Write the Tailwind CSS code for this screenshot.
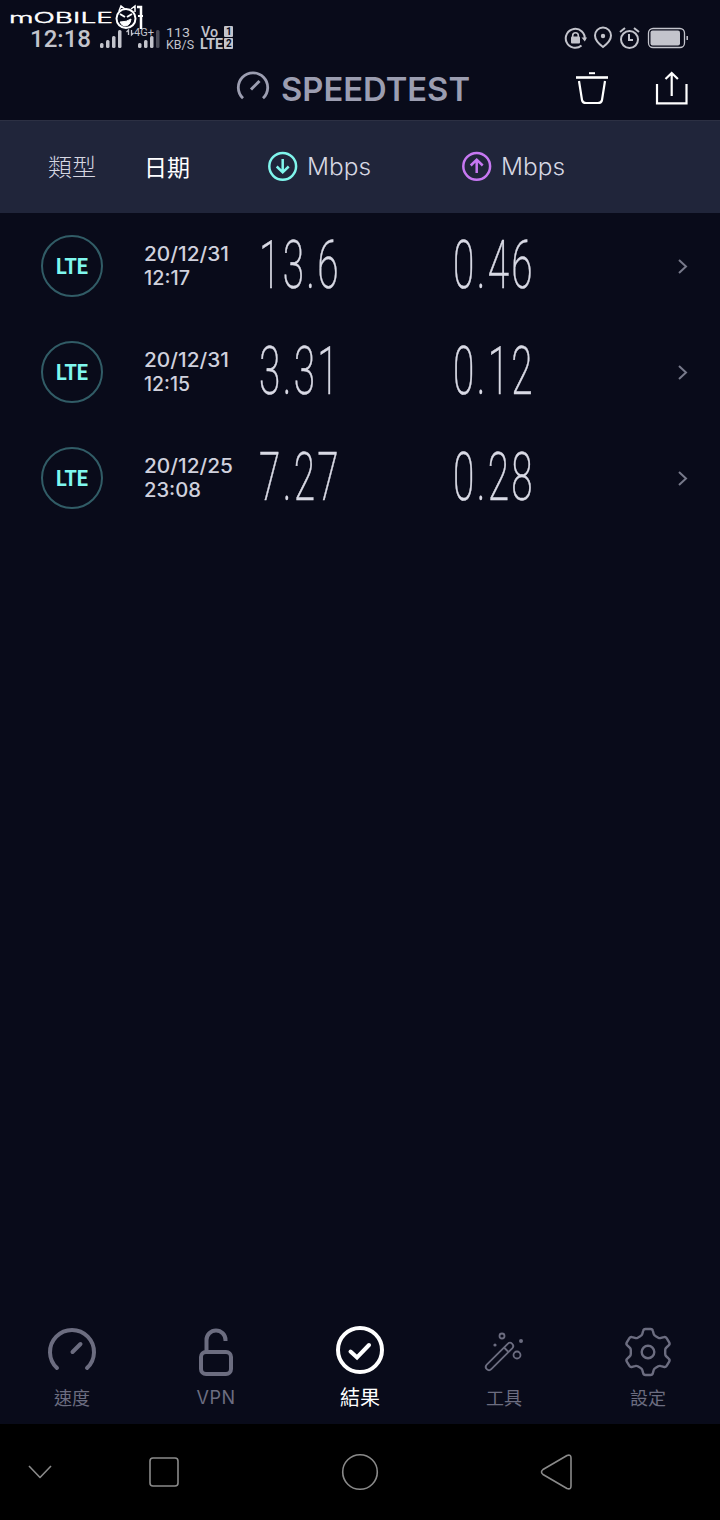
<!DOCTYPE html>
<html lang="zh-Hant">
<head>
    <meta charset="UTF-8">
    <meta name="viewport" content="width=device-width, initial-scale=1.0">
    <title>Speedtest</title>
    <script src="https://cdn.jsdelivr.net/npm/@tailwindcss/browser@4"></script>
</head>
<body class="bg-[#090b1a] font-['Inter','Noto_Sans_CJK_TC',sans-serif]">
    <div class="relative w-[720px] h-[1520px] flex flex-col overflow-hidden">

        <!-- watermark -->
        <svg class="absolute left-0 top-0 z-10" width="160" height="36" fill="none" stroke="#fff">
            <text x="9" y="23" textLength="104" lengthAdjust="spacingAndGlyphs" font-size="14.5" font-weight="300" fill="#fff" stroke="#fff" stroke-width=".4">mOBILE</text>
            <circle cx="126" cy="18.500" r="9.500" stroke-width="2"/>
            <path d="M119 11l2-5 4 3M131 9l4-3 0 6" stroke-width="1.500"/>
            <path d="M120 14l5 3M132 14l-5 3" stroke-width="2"/>
            <path d="M120 22q7 0 11-3q-1 7-6 7q-3 0-5-4z" fill="#fff" stroke-width="1"/>
            <path d="M137 7h4v22" stroke-width="2.500"/>
            <path d="M138 16h5" stroke-width="2"/>
        </svg>

        <!-- status bar -->
        <div class="h-14 shrink-0 flex items-start text-[#c3c4cc]">
            <svg width="250" height="56" fill="currentColor" class="font-['Roboto']">
                <text x="30" y="47" textLength="61" lengthAdjust="spacingAndGlyphs" font-size="24" font-weight="500">12:18</text>
                <g>
                    <rect x="100" y="43" width="3.500" height="5" rx="1.500"/>
                    <rect x="106" y="40" width="3.500" height="8" rx="1.500"/>
                    <rect x="112" y="36" width="3.500" height="12" rx="1.500"/>
                    <rect x="118" y="30" width="3.500" height="18" rx="1.500"/>
                    <rect x="138" y="43" width="3.500" height="5" rx="1.500"/>
                    <rect x="144" y="40" width="3.500" height="8" rx="1.500"/>
                    <rect x="150" y="36" width="3.500" height="12" rx="1.500"/>
                    <rect x="156" y="30" width="3.500" height="18" rx="1.500" opacity=".35"/>
                </g>
                <path d="M128.500 35v-5l-2 2M131.500 30v5l2-2" stroke="currentColor" stroke-width="1.300" fill="none"/>
                <text x="134" y="36" textLength="20" lengthAdjust="spacingAndGlyphs" font-size="11">4G+</text>
                <text x="166" y="37" textLength="24" lengthAdjust="spacingAndGlyphs" font-size="13.500">113</text>
                <text x="166" y="49" textLength="28" lengthAdjust="spacingAndGlyphs" font-size="12.500">KB/S</text>
                <text x="201" y="37" textLength="17" lengthAdjust="spacingAndGlyphs" font-size="14" font-weight="500">Vo</text>
                <text x="200" y="49" textLength="23" lengthAdjust="spacingAndGlyphs" font-size="14" font-weight="700">LTE</text>
                <rect x="224" y="26" width="9" height="11" rx="1"/>
                <rect x="224" y="38" width="9" height="11" rx="1"/>
                <g fill="#090b1a" font-size="10" font-weight="700">
                    <text x="226" y="35">1</text>
                    <text x="226" y="47">2</text>
                </g>
            </svg>
            <svg width="150" height="56" class="ml-[310px]" fill="none" stroke="currentColor" stroke-width="2">
                <path d="M21.500 45.500a9.500 9.500 0 1 1 3.200-6"/>
                <path d="M21.500 37.500h5.500l-2.200 4z" fill="currentColor" stroke="none"/>
                <rect x="11" y="36.500" width="9" height="7" rx="1" fill="currentColor" stroke="none"/>
                <path d="M12.700 37v-1.500a2.800 2.800 0 0 1 5.600 0V37" stroke-width="1.600"/>
                <path d="M43 47q-8-6-8-11.500a8 8 0 0 1 16 0Q51 41 43 47z"/>
                <circle cx="43" cy="36" r="2.200" fill="currentColor" stroke="none"/>
                <circle cx="69.500" cy="39.500" r="8.500"/>
                <path d="M69 34v6h4M60 32l5-4M74 28l5 4"/>
                <rect x="88.500" y="28.500" width="36" height="19" rx="4.500" stroke-width="1.300"/>
                <rect x="90.500" y="30.500" width="29.500" height="15" rx="2" fill="currentColor" stroke="none"/>
                <path d="M127.200 36v4" stroke-width="1.500"/>
            </svg>
        </div>

        <!-- title bar -->
        <div class="h-16 shrink-0 flex text-[#9c9eb1]">
            <svg width="490" height="64" fill="none" stroke="currentColor" class="shrink-0">
                <path d="M243 42.300a14.700 14.700 0 1 1 20 0" stroke-width="2.800"/>
                <path d="M251 33.500l8.500-8.500" stroke-width="3"/>
                <text x="281" y="44.500" textLength="189" lengthAdjust="spacingAndGlyphs" font-size="32" font-weight="600" fill="currentColor" stroke="none">SPEEDTEST</text>
            </svg>
            <svg width="230" height="64" fill="none" stroke="#fff" stroke-width="2.200" class="shrink-0">
                <path d="M86 21.500h32" stroke-width="2.600"/>
                <path d="M99 17.200h6" stroke-width="2"/>
                <path d="M89 25l3 19q.5 3 4 3h12q3.500 0 4-3l3-19"/>
                <path d="M167 28v19.300h29.500V28M181.700 40V17.500M175.500 23l6.200-6 6.200 6"/>
            </svg>
        </div>

        <!-- column heads -->
        <div class="h-[93px] shrink-0 flex items-center bg-[#20253a] border-t border-[#2c3043] pb-0.5 text-2xl text-[#d6d7e2]">
            <div class="w-[144px] pl-12 font-['Noto_Sans_CJK_TC'] font-light">類型</div>
            <div class="w-[124px] text-[23px] text-white font-['Noto_Sans_CJK_TC']">日期</div>
            <div class="w-[194px] flex items-center gap-[9px]">
                <svg width="30" height="30" fill="none" stroke="#80f5ec" stroke-width="2.500">
                    <circle cx="14.700" cy="15.300" r="13.400"/>
                    <path d="M14.700 8v13M8.700 15.500l6 5.800 6-5.800"/>
                </svg>
                <svg width="66" height="36" fill="currentColor"><text x="0" y="27" textLength="64" lengthAdjust="spacingAndGlyphs" font-size="23.500" font-weight="300">Mbps</text></svg>
            </div>
            <div class="flex items-center gap-[9px]">
                <svg width="30" height="30" fill="none" stroke="#c778f2" stroke-width="2.500">
                    <circle cx="14.700" cy="15.300" r="13.400"/>
                    <path d="M14.700 22V9M8.700 14.500l6-5.800 6 5.800"/>
                </svg>
                <svg width="66" height="36" fill="currentColor"><text x="0" y="27" textLength="64" lengthAdjust="spacingAndGlyphs" font-size="23.500" font-weight="300">Mbps</text></svg>
            </div>
        </div>

        <!-- results -->
        <div id="results" class="flex-1"></div>

        <!-- tabs -->
        <div class="h-[106px] shrink-0 grid grid-cols-5 text-[#6c6d80] text-[18px] font-['Inter','Noto_Sans_CJK_TC']">
            <div class="flex flex-col items-center">
                <svg width="56" height="64" fill="none" stroke="currentColor" stroke-width="4" stroke-linecap="round">
                    <path d="M13 50a22 22 0 1 1 30 0M28.500 34l8-8"/>
                </svg>
                <span class="leading-[34px]">速度</span>
            </div>
            <div class="flex flex-col items-center">
                <svg width="56" height="64" fill="none" stroke="currentColor" stroke-width="4">
                    <rect x="13" y="34" width="30" height="22" rx="5"/>
                    <path d="M18.500 34V22a9.500 9.500 0 0 1 19 0v1"/>
                </svg>
                <span class="leading-[32px] tracking-wide">VPN</span>
            </div>
            <div class="flex flex-col items-center text-white text-[20px]">
                <svg width="56" height="64" fill="none" stroke="currentColor" stroke-width="4">
                    <circle cx="28" cy="32" r="22"/>
                    <path d="M18.500 33.500l6.500 6 12-12.500" stroke-linecap="round"/>
                </svg>
                <span class="leading-[33px]">結果</span>
            </div>
            <div class="flex flex-col items-center">
                <svg width="56" height="64" fill="none" stroke="currentColor" stroke-width="1.800">
                    <rect x="-18" y="-3.200" width="36" height="6.400" rx="3.200" transform="translate(23.500 38.500) rotate(-45)"/>
                    <path d="M28 29.500l4.500 4.500"/>
                    <circle cx="26" cy="18" r="2.500"/>
                    <circle cx="41" cy="37" r="3.500"/>
                    <circle cx="45" cy="23" r="2" fill="currentColor" stroke="none"/>
                    <circle cx="19" cy="27" r="1.600" fill="currentColor" stroke="none"/>
                </svg>
                <span class="leading-[34px]">工具</span>
            </div>
            <div class="flex flex-col items-center">
                <svg width="56" height="64" fill="none" stroke="currentColor" stroke-width="2.400" stroke-linejoin="round">
                    <path d="M25.500 11h5q2 0 2.400 2l.8 3q.4 1.600 2 2.200l2.600 1.500q1.300.7 2.800.2l2.700-.8q1.800-.6 2.800 1l2.600 4.300q1 1.700-.5 3l-2.300 2.100q-1.200 1-1.200 2.500v4q0 1.500 1.200 2.500l2.300 2.100q1.500 1.300.5 3l-2.600 4.300q-1 1.600-2.800 1l-2.700-.8q-1.500-.5-2.800.2l-2.600 1.500q-1.600.6-2 2.200l-.8 3q-.4 2-2.400 2h-5q-2 0-2.400-2l-.8-3q-.4-1.600-2-2.200l-2.600-1.500q-1.300-.7-2.800-.2l-2.700.8q-1.800.6-2.800-1l-2.600-4.300q-1-1.700.5-3l2.300-2.100q1.200-1 1.200-2.500v-4q0-1.500-1.200-2.500l-2.300-2.100q-1.500-1.300-.5-3l2.600-4.300q1-1.600 2.800-1l2.700.8q1.500.5 2.800-.2l2.600-1.500q1.600-.6 2-2.200l.8-3q.4-2 2.400-2z"/>
                    <circle cx="28" cy="34" r="6.300"/>
                </svg>
                <span class="leading-[34px]">設定</span>
            </div>
        </div>

        <!-- android navigation -->
        <div class="h-24 shrink-0 bg-black">
            <svg width="720" height="96" fill="none" stroke="#8a8a8a" stroke-width="1.600" stroke-linejoin="round">
                <path d="M29 42l11 11.500L51 42"/>
                <rect x="150" y="34" width="28" height="28" rx="3"/>
                <circle cx="360" cy="48" r="17.300"/>
                <path d="M567 31.500q4-1.500 4 2.500v28q0 4-4 2.500l-24-14q-3-2.500 0-5z"/>
            </svg>
        </div>
    </div>

    <script>
        const results = [
            { date: '20/12/31', dateWidth: 85, time: '12:17', timeWidth: 46, down: '13.6', up: '0.46' },
            { date: '20/12/31', dateWidth: 85, time: '12:15', timeWidth: 46, down: '3.31', up: '0.12' },
            { date: '20/12/25', dateWidth: 89, time: '23:08', timeWidth: 57, down: '7.27', up: '0.28' }
        ];

        // tall narrow figures
        function figure(value) {
            return `<svg width="194" height="106" fill="#d9dae5" stroke="#d9dae5" stroke-width=".5" class="font-['Roboto']">
                <text x="-1" y="74.500" textLength="82" lengthAdjust="spacingAndGlyphs" letter-spacing="4" font-size="66" font-weight="200">${value}</text>
            </svg>`;
        }

        document.getElementById('results').innerHTML = results.map(r => `
            <div class="h-[106px] flex items-center">
                <div class="w-[144px] pl-[41px]">
                    <div class="w-[62px] h-[62px] rounded-full border-2 border-[#315c66] flex items-center justify-center">
                        <svg width="40" height="36" fill="#7ff7ee" class="font-['Roboto']">
                            <text x="4" y="26" textLength="32" lengthAdjust="spacingAndGlyphs" font-size="22" font-weight="700">LTE</text>
                        </svg>
                    </div>
                </div>
                <svg width="116" height="106" fill="#d0d1dd" font-size="19.500" font-weight="500">
                    <text x="0" y="48" textLength="${r.dateWidth}" lengthAdjust="spacingAndGlyphs">${r.date}</text>
                    <text x="0" y="72" textLength="${r.timeWidth}" lengthAdjust="spacingAndGlyphs">${r.time}</text>
                </svg>
                ${figure(r.down)}
                ${figure(r.up)}
                <svg width="14" height="16" class="ml-[29px]" fill="none" stroke="#77798a" stroke-width="2">
                    <path d="M2 2l7 6.500-7 6.500"/>
                </svg>
            </div>`).join('');
    </script>
</body>
</html>
